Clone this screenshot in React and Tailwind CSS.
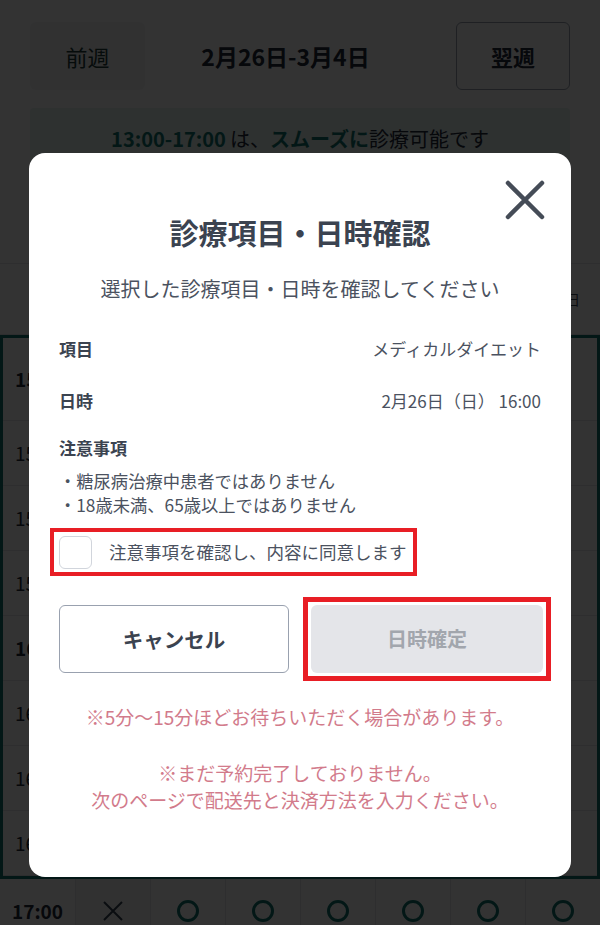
import React from 'react'

const rows = [
  { time: '15:00', bold: true },
  { time: '15:15' },
  { time: '15:30' },
  { time: '15:45' },
  { time: '16:00', bold: true },
  { time: '16:15' },
  { time: '16:30' },
  { time: '16:45' },
]

const days = ['26', '27', '28', '1', '2', '3', '4']

const Circle = () => (
  <span className="block h-[22px] w-[22px] rounded-full border-[3px] border-[#0f766e]"></span>
)

const Cross = () => (
  <svg width="24" height="24" viewBox="0 0 24 24" className="text-gray-700">
    <path d="M3 3 L21 21 M21 3 L3 21" stroke="currentColor" strokeWidth="2" />
  </svg>
)

const SlotRow = ({ time, bold, first }) => (
  <div className={`grid grid-cols-8 border-b border-gray-200 ${first ? 'h-[83px]' : 'h-[65px]'}`}>
    <div className={`flex items-center pl-3 text-[19px] text-gray-800 ${bold ? 'font-bold' : ''}`}>{time}</div>
    <div className="flex items-center justify-center border-l border-gray-200 bg-gray-100">
      <Cross />
    </div>
    {days.slice(1).map((d) => (
      <div key={d} className="flex items-center justify-center border-l border-gray-200">
        <Circle />
      </div>
    ))}
  </div>
)

const Background = () => (
  <div className="flex flex-col">
    <div className="flex items-center justify-between px-[30px] pt-[22px]">
      <button className="h-[68px] w-[115px] rounded-md bg-gray-100 text-[22px] text-[#1f3d3a]">前週</button>
      <div className="mr-[30px] text-[23px] font-bold text-gray-800">2月26日-3月4日</div>
      <button className="h-[68px] w-[114px] rounded-md border border-gray-400 text-[22px] font-bold text-gray-800">翌週</button>
    </div>
    <div className="mx-[30px] mt-[18px] flex h-[62px] items-center justify-center rounded-sm bg-[#e3f2ef] text-[20px] text-gray-800">
      <span className="font-bold text-[#0f766e]">13:00-17:00</span>
      <span className="ml-1">は、</span>
      <span className="font-bold text-[#0f766e]">スムーズに</span>
      <span>診療可能です</span>
    </div>
    {/* day header: only the last column peeks out from behind the modal */}
    <div className="mt-[93px] grid h-[72px] grid-cols-8 border-y border-gray-200">
      <div></div>
      {days.map((d, i) => (
        <div key={d} className="flex items-center justify-end border-l border-gray-200 pr-[20px] text-[14px] text-gray-700">
          {i === days.length - 1 ? '日' : ''}
        </div>
      ))}
    </div>
    <div className="border-[3px] border-[#0f766e]">
      {rows.map((r, i) => (
        <SlotRow key={r.time} {...r} first={i === 0} />
      ))}
    </div>
    <SlotRow time="17:00" bold />
  </div>
)

const ConfirmModal = () => (
  <div className="relative flex h-[724px] w-[542px] flex-col items-center rounded-2xl bg-white px-[30px]">
    <button className="absolute right-[26px] top-[27px] text-[#454c57]">
      <svg width="40" height="40" viewBox="0 0 40 40">
        <path d="M3 3 L37 37 M37 3 L3 37" stroke="currentColor" strokeWidth="4.5" strokeLinecap="round" />
      </svg>
    </button>

    <h2 className="mt-[60px] text-[29px] font-bold leading-[38px] text-[#3b4350]">診療項目・日時確認</h2>
    <p className="mt-[24px] text-[20px] leading-[28px] text-[#4b5260]">選択した診療項目・日時を確認してください</p>

    <div className="mt-[33px] flex w-full items-center justify-between text-[17px] leading-[26px] text-[#4b5260]">
      <span className="font-bold text-[#3b4350]">項目</span>
      <span>メディカルダイエット</span>
    </div>
    <div className="mt-[26px] flex w-full items-center justify-between text-[17px] leading-[26px] text-[#4b5260]">
      <span className="font-bold text-[#3b4350]">日時</span>
      <span>2月26日（日） 16:00</span>
    </div>

    <div className="mt-[22px] w-full text-[17px] font-bold leading-[24px] text-[#3b4350]">注意事項</div>
    <ul className="mt-[9px] w-full text-[17.3px] leading-[24px] text-[#4b5260]">
      <li>・糖尿病治療中患者ではありません</li>
      <li>・18歳未満、65歳以上ではありません</li>
    </ul>

    <div className="mt-[11px] flex h-[48px] w-full">
      <label className="ml-[-9px] flex w-[367px] items-center border-4 border-[#e81e25] pl-[5px]">
        <span className="h-[33px] w-[33px] rounded-md border border-gray-300"></span>
        <span className="ml-[17px] text-[17.5px] text-[#4b5260]">注意事項を確認し、内容に同意します</span>
      </label>
    </div>

    <div className="mt-[21px] flex w-full items-center justify-between">
      <button className="h-[68px] w-[230px] rounded-md border border-gray-400 text-[20.5px] font-bold text-[#3b4350]">キャンセル</button>
      <div className="mr-[-10px] h-[84px] w-[248px] border-[5px] border-[#e81e25] p-[3px]">
        <button className="h-full w-full rounded-md bg-[#e4e5e9] text-[20px] font-bold text-[#a2a6ad]">日時確定</button>
      </div>
    </div>

    <p className="mt-[22px] text-[19px] leading-[28px] text-[#d27b8b]">※5分〜15分ほどお待ちいただく場合があります。</p>
    <p className="mt-[28px] text-center text-[19px] leading-[27px] text-[#d27b8b]">
      ※まだ予約完了しておりません。
      <br />
      次のページで配送先と決済方法を入力ください。
    </p>
  </div>
)

export default function App() {
  return (
    <div className="relative h-[925px] w-[600px] overflow-hidden bg-white font-['Noto_Sans_CJK_JP',sans-serif]">
      <Background />
      <div className="absolute inset-0 flex justify-center bg-black/80 pt-[153px]">
        <ConfirmModal />
      </div>
    </div>
  )
}
